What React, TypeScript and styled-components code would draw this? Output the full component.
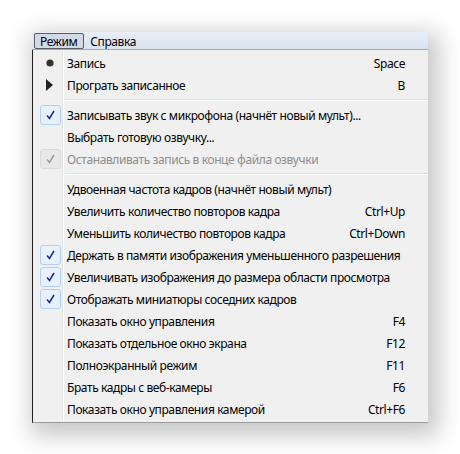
import React from 'react';
import styled, { createGlobalStyle } from 'styled-components';

const GlobalStyle = createGlobalStyle`
  body {
    margin: 0;
    background: #ffffff;
    font-family: "Noto Sans", "Liberation Sans", sans-serif;
  }
`;

const Page = styled.div`
  width: 460px;
  height: 454px;
  padding: 32px 0 0 32px;
  box-sizing: border-box;
`;

const Window = styled.div`
  width: 396px;
  display: flex;
  flex-direction: column;
  box-shadow: 5px 7px 22px 6px rgba(0, 0, 0, 0.22);
`;

const MenuBar = styled.div`
  height: 17px;
  display: flex;
  align-items: stretch;
  padding-left: 2px;
  background: linear-gradient(#e9eef7, #dbe3f1);
  border-bottom: 1px solid #a4a9b1;
`;

const BarItem = styled.div<{ $open?: boolean }>`
  display: flex;
  align-items: center;
  padding: 0 6px 0 5px;
  font-size: 12px;
  letter-spacing: -0.4px;
  color: #000;
  box-sizing: border-box;
  border: 1px solid ${p => (p.$open ? '#5a5f66' : 'transparent')};
  border-radius: 2px;
  background: ${p => (p.$open ? '#d4dae3' : 'transparent')};
  margin: 1px 0 0;
`;

const Menu = styled.div`
  position: relative;
  display: flex;
  flex-direction: column;
  padding: 2px 0;
  background: #f0f0f0;
  border-left: 1px solid #202020;
  border-bottom: 1px solid #9a9a9a;
  &::before {
    content: '';
    position: absolute;
    left: 29px;
    top: 0;
    bottom: 0;
    width: 1px;
    background: #e2e3e3;
    border-right: 1px solid #ffffff;
  }
`;

const Row = styled.div<{ $disabled?: boolean }>`
  height: 22px;
  display: grid;
  grid-template-columns: 31px 1fr auto;
  align-items: center;
  font-size: 12px;
  letter-spacing: -0.4px;
  color: ${p => (p.$disabled ? '#8d8d8d' : '#000')};
  position: relative;
  z-index: 1;
`;

const IconCell = styled.div`
  display: flex;
  align-items: center;
  justify-content: center;
  height: 22px;
`;

const Label = styled.span`
  padding-left: 3px;
  white-space: nowrap;
`;

const Shortcut = styled.span`
  padding-right: 23px;
  padding-left: 12px;
  text-align: right;
  white-space: nowrap;
`;

const CheckBox = styled.div<{ $disabled?: boolean }>`
  width: 19px;
  height: 18px;
  margin-left: 3px;
  border: 1px solid ${p => (p.$disabled ? '#d9dadb' : '#aecff7')};
  border-radius: 3px;
  background: ${p => (p.$disabled ? '#e8e8e8' : '#e8f0fd')};
  display: flex;
  align-items: center;
  justify-content: center;
`;

const Separator = styled.div`
  height: 8px;
  display: flex;
  align-items: center;
  padding-left: 32px;
  position: relative;
  z-index: 1;
  &::after {
    content: '';
    flex: 1;
    height: 1px;
    background: #e0e0e0;
    border-bottom: 1px solid #ffffff;
    margin-top: -1px;
  }
`;

type Icon = 'bullet' | 'arrow' | 'check' | 'checkOff' | undefined;

type Item =
  | { sep: true }
  | { sep?: false; label: string; shortcut?: string; icon?: Icon; disabled?: boolean };

const items: Item[] = [
  { label: 'Запись', shortcut: 'Space', icon: 'bullet' },
  { label: 'Програть записанное', shortcut: 'B', icon: 'arrow' },
  { sep: true },
  { label: 'Записывать звук с микрофона (начнёт новый мульт)...', icon: 'check' },
  { label: 'Выбрать готовую озвучку...' },
  { label: 'Останавливать запись в конце файла озвучки', icon: 'checkOff', disabled: true },
  { sep: true },
  { label: 'Удвоенная частота кадров (начнёт новый мульт)' },
  { label: 'Увеличить количество повторов кадра', shortcut: 'Ctrl+Up' },
  { label: 'Уменьшить количество повторов кадра', shortcut: 'Ctrl+Down' },
  { label: 'Держать в памяти изображения уменьшенного разрешения', icon: 'check' },
  { label: 'Увеличивать изображения до размера области просмотра', icon: 'check' },
  { label: 'Отображать миниатюры соседних кадров', icon: 'check' },
  { label: 'Показать окно управления', shortcut: 'F4' },
  { label: 'Показать отдельное окно экрана', shortcut: 'F12' },
  { label: 'Полноэкранный режим', shortcut: 'F11' },
  { label: 'Брать кадры с веб-камеры', shortcut: 'F6' },
  { label: 'Показать окно управления камерой', shortcut: 'Ctrl+F6' },
];

const CheckMark = ({ color }: { color: string }) => (
  <svg width="9" height="10" viewBox="0 0 9 10">
    <path d="M1 5.5 L3.5 8.5 L8 1" fill="none" stroke={color} strokeWidth="1.5" />
  </svg>
);

const renderIcon = (icon: Icon) => {
  switch (icon) {
    case 'bullet':
      return (
        <svg width="8" height="8" viewBox="0 0 8 8" style={{ marginLeft: 2 }}>
          <circle cx="4" cy="4" r="3.6" fill="#333" />
        </svg>
      );
    case 'arrow':
      return (
        <svg width="7" height="12" viewBox="0 0 7 12" style={{ marginLeft: 2 }}>
          <path d="M0 0 L7 6 L0 12 Z" fill="#222" />
        </svg>
      );
    case 'check':
      return (
        <CheckBox>
          <CheckMark color="#1a2a8c" />
        </CheckBox>
      );
    case 'checkOff':
      return (
        <CheckBox $disabled>
          <CheckMark color="#9a9a9a" />
        </CheckBox>
      );
    default:
      return null;
  }
};

export default function App() {
  return (
    <>
      <GlobalStyle />
      <Page>
        <Window>
          <MenuBar>
            <BarItem $open>Режим</BarItem>
            <BarItem>Справка</BarItem>
          </MenuBar>
          <Menu>
            {items.map((it, i) =>
              it.sep ? (
                <Separator key={i} />
              ) : (
                <Row key={i} $disabled={it.disabled}>
                  <IconCell>{renderIcon(it.icon)}</IconCell>
                  <Label>{it.label}</Label>
                  <Shortcut>{it.shortcut}</Shortcut>
                </Row>
              )
            )}
          </Menu>
        </Window>
      </Page>
    </>
  );
}
